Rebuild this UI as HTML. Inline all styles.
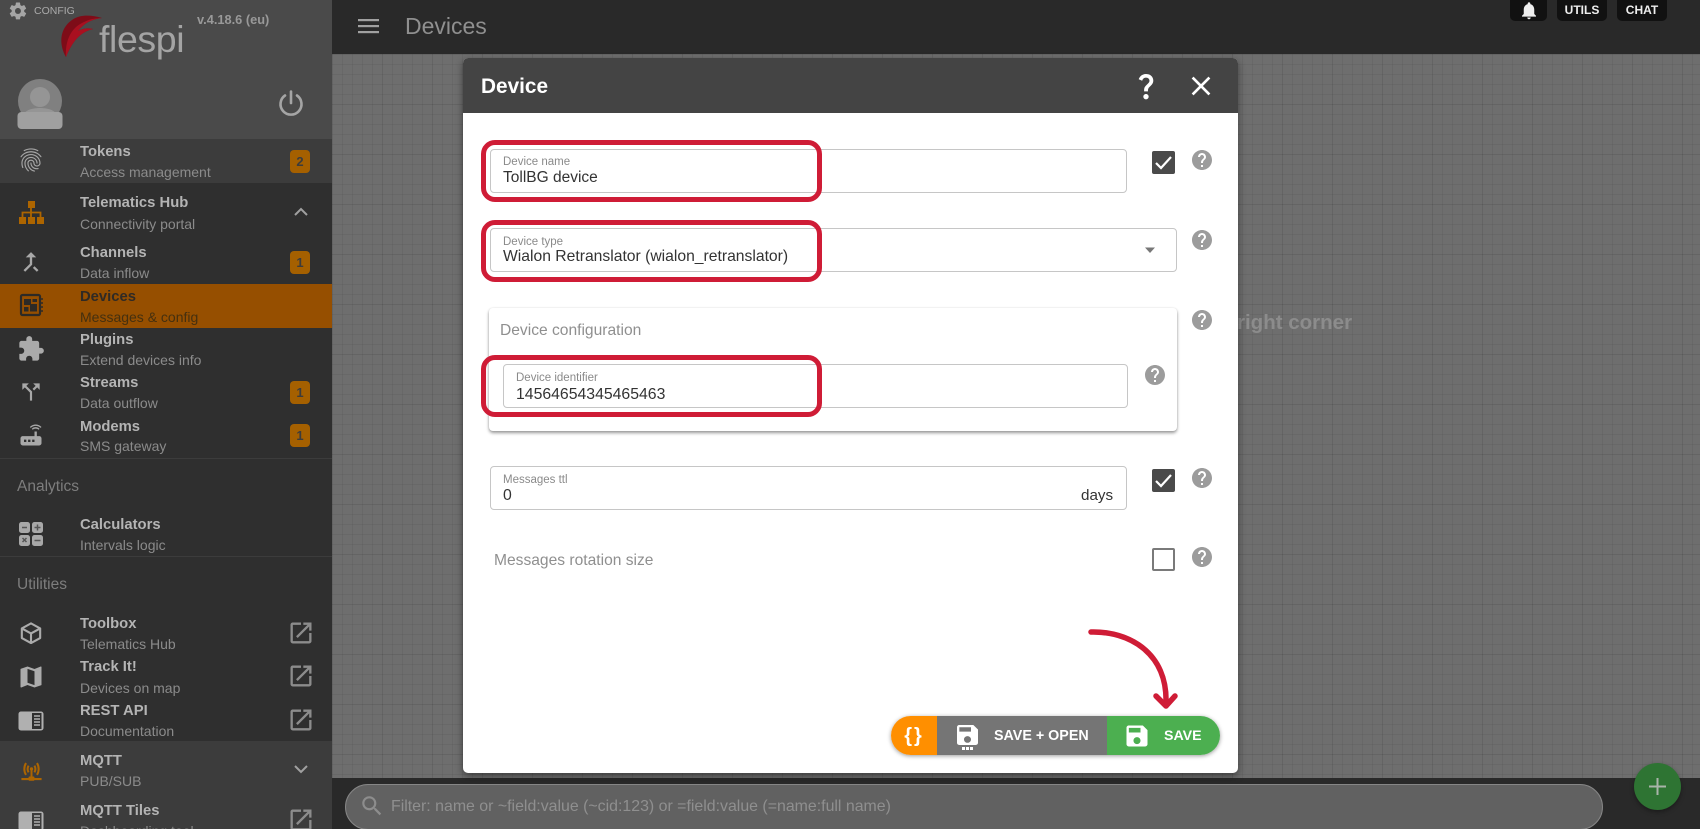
<!DOCTYPE html>
<html><head><meta charset="utf-8"><title>flespi Devices</title>
<style>
*{box-sizing:border-box}
html,body{margin:0;padding:0;width:1700px;height:829px;overflow:hidden;background:#2f2f2f;font-family:"Liberation Sans",sans-serif}
body{position:relative}
.t{position:absolute;white-space:nowrap}
.a{left:80px;font-size:14.8px;font-weight:700;color:#b4b4b4;line-height:20px;height:20px;margin-top:1px}
.s{left:80px;font-size:14px;color:#8b8b8b;line-height:18px;height:18px}
.r{position:absolute;left:0;width:332px}
.ic{position:absolute}
.b{position:absolute;left:290px;width:20px;height:23px;border-radius:4px;background:#a56000;color:#3c3c3c;font-size:13px;font-weight:700;text-align:center;line-height:23px}
.f{position:absolute;background:#fff;border:1px solid #c6c6c6;border-radius:4px;height:44px}
.l{font-size:11.5px;color:#8a8a8a;line-height:14px}
.v{font-size:15.8px;color:#333;line-height:18px}
.red{position:absolute;border:5px solid #cf1c36;border-radius:14px;left:481px;width:341px;height:62px}
.tb{position:absolute;top:0;height:21px;background:#111;border-radius:0 0 5px 5px;color:#eee;font-weight:700;font-size:12px;line-height:21px;text-align:center}
.cb{position:absolute;left:1152px;width:23px;height:23px;background:#4a4a4a;border-radius:2px}
</style></head><body>

<!-- sidebar -->
<div class="r" style="top:0;height:139px;background:#4a4a4a"></div>
<div class="r" style="top:139px;height:44px;background:#3c3c3c"></div>
<div class="r" style="top:183px;height:646px;background:#2f2f2f"></div>
<div class="r" style="top:284px;height:44px;background:#964f00"></div>
<div class="r" style="top:458px;height:1px;background:#3c3c3c"></div>
<div class="r" style="top:556px;height:1px;background:#3c3c3c"></div>
<div class="r" style="top:741px;height:88px;background:#3c3c3c"></div>

<svg class="ic" style="left:9px;top:1px" width="18" height="20" viewBox="0 0 24 24" fill="#a5a5a5"><path transform="translate(-1.5 -1.5) scale(1.12)" d="M19.43 12.98c.04-.32.07-.64.07-.98s-.03-.66-.07-.98l2.11-1.65c.19-.15.24-.42.12-.64l-2-3.46c-.12-.22-.39-.3-.61-.22l-2.49 1c-.52-.4-1.08-.73-1.69-.98l-.38-2.65C14.46 2.18 14.25 2 14 2h-4c-.25 0-.46.18-.49.42l-.38 2.65c-.61.25-1.17.59-1.69.98l-2.49-1c-.23-.09-.49 0-.61.22l-2 3.46c-.13.22-.07.49.12.64l2.11 1.65c-.04.32-.07.65-.07.98s.03.66.07.98l-2.11 1.65c-.19.15-.24.42-.12.64l2 3.46c.12.22.39.3.61.22l2.49-1c.52.4 1.08.73 1.69.98l.38 2.65c.03.24.24.42.49.42h4c.25 0 .46-.18.49-.42l.38-2.65c.61-.25 1.17-.59 1.69-.98l2.49 1c.23.09.49 0 .61-.22l2-3.46c.12-.22.07-.49-.12-.64l-2.11-1.65zM12 15.5c-1.93 0-3.5-1.57-3.5-3.5s1.57-3.5 3.5-3.5 3.5 1.57 3.5 3.5-1.57 3.5-3.5 3.5z"/></svg>
<div class="t" style="left:34px;top:4px;font-size:10.5px;font-weight:400;color:#aaa;line-height:14px">CONFIG</div>
<div class="t" style="left:197px;top:12px;font-size:12.8px;font-weight:700;color:#999;line-height:16px">v.4.18.6 (eu)</div>

<!-- logo -->
<svg class="ic" style="left:0;top:0" width="110" height="62" viewBox="0 0 110 62">
<path d="M66 57C59 45 59 29 72 20C80 14 92 15 102 18C92 19 84 23 78 31C84 28 88 28 93 29C80 32 72 42 66 57Z" fill="#7e0c18"/>
<path d="M66 57C65 42 70 28 84 22C90 19 96 18 102 18C92 19 84 23 78 31C84 28 88 28 93 29C80 32 72 42 66 57Z" fill="#a91020"/>
</svg>
<div class="t" style="left:99px;top:16px;font-size:37.500px;font-weight:400;color:#a4a4a4;line-height:46px;letter-spacing:-.4px">flespi</div>

<!-- avatar -->
<svg class="ic" style="left:15px;top:76px" width="50" height="56" viewBox="0 0 50 56">
<circle cx="25" cy="25" r="22" fill="#808080"/>
<circle cx="25" cy="21" r="10" fill="#959595"/>
<path d="M9 38C12 30 38 30 41 38Z" fill="#959595"/>
<rect x="2.500" y="36" width="45" height="17" rx="4" fill="#a0a0a0"/>
</svg>
<svg class="ic" style="left:276px;top:88px" width="30" height="30" viewBox="0 0 30 30" fill="none" stroke="#a5a5a5" stroke-width="2.600" stroke-linecap="round"><path d="M15 3.500V15"/><path d="M9 7.500a10.500 10.500 0 1 0 12 0"/></svg>

<!-- menu text -->
<div class="t a" style="top:141px">Tokens</div><div class="t s" style="top:163px">Access management</div>
<div class="t a" style="top:192px">Telematics Hub</div><div class="t s" style="top:215px">Connectivity portal</div>
<div class="t a" style="top:242px">Channels</div><div class="t s" style="top:264px">Data inflow</div>
<div class="t a" style="top:286px;color:#2f2a25">Devices</div><div class="t s" style="top:308px;color:#45300f">Messages &amp; config</div>
<div class="t a" style="top:329px">Plugins</div><div class="t s" style="top:351px">Extend devices info</div>
<div class="t a" style="top:372px">Streams</div><div class="t s" style="top:394px">Data outflow</div>
<div class="t a" style="top:416px">Modems</div><div class="t s" style="top:437px">SMS gateway</div>
<div class="t" style="left:17px;top:477px;font-size:15.500px;color:#7d7d7d;line-height:20px">Analytics</div>
<div class="t a" style="top:514px">Calculators</div><div class="t s" style="top:536px">Intervals logic</div>
<div class="t" style="left:17px;top:575px;font-size:15.500px;color:#7d7d7d;line-height:20px">Utilities</div>
<div class="t a" style="top:613px">Toolbox</div><div class="t s" style="top:635px">Telematics Hub</div>
<div class="t a" style="top:656px">Track It!</div><div class="t s" style="top:679px">Devices on map</div>
<div class="t a" style="top:700px">REST API</div><div class="t s" style="top:722px">Documentation</div>
<div class="t a" style="top:750px">MQTT</div><div class="t s" style="top:772px">PUB/SUB</div>
<div class="t a" style="top:800px">MQTT Tiles</div><div class="t s" style="top:822px">Dashboarding tool</div>

<div class="b" style="top:150px">2</div>
<div class="b" style="top:251px">1</div>
<div class="b" style="top:381px">1</div>
<div class="b" style="top:424px">1</div>

<!-- menu icons -->
<svg class="ic" style="left:17px;top:146px" width="28" height="28" viewBox="0 0 24 24" fill="#a5a5a5"><path d="M17.81 4.47c-.08 0-.16-.02-.23-.06C15.66 3.42 14 3 12.01 3c-1.98 0-3.86.47-5.57 1.41-.24.13-.54.04-.68-.2-.13-.24-.04-.55.2-.68C7.82 2.52 9.86 2 12.01 2c2.13 0 3.99.47 6.03 1.52.25.13.34.43.21.67-.09.18-.26.28-.44.28zM3.5 9.72c-.1 0-.2-.03-.29-.09-.23-.16-.28-.47-.12-.7.99-1.4 2.25-2.5 3.75-3.27C9.98 4.04 14 4.03 17.15 5.65c1.5.77 2.76 1.86 3.75 3.25.16.22.11.54-.12.7-.23.16-.54.11-.7-.12-.9-1.26-2.04-2.25-3.39-2.94-2.87-1.47-6.54-1.47-9.4.01-1.36.7-2.5 1.7-3.4 2.96-.08.14-.23.21-.39.21zm6.25 12.07c-.13 0-.26-.05-.35-.15-.87-.87-1.34-1.43-2.01-2.64-.69-1.23-1.05-2.73-1.05-4.34 0-2.97 2.54-5.39 5.66-5.39s5.66 2.42 5.66 5.39c0 .28-.22.5-.5.5s-.5-.22-.5-.5c0-2.42-2.09-4.39-4.66-4.39s-4.66 1.97-4.66 4.39c0 1.44.32 2.77.93 3.85.64 1.15 1.08 1.64 1.85 2.42.19.2.19.51 0 .71-.11.1-.24.15-.37.15zm7.17-1.85c-1.19 0-2.24-.3-3.1-.89-1.49-1.01-2.38-2.65-2.38-4.39 0-.28.22-.5.5-.5s.5.22.5.5c0 1.41.72 2.74 1.94 3.56.71.48 1.54.71 2.54.71.24 0 .64-.03 1.04-.1.27-.05.53.13.58.41.05.27-.13.53-.41.58-.57.11-1.07.12-1.21.12zM14.91 22c-.04 0-.09-.01-.13-.02-1.59-.44-2.63-1.03-3.72-2.1-1.4-1.39-2.17-3.24-2.17-5.22 0-1.62 1.38-2.94 3.08-2.94s3.08 1.32 3.08 2.94c0 1.07.93 1.94 2.08 1.94s2.08-.87 2.08-1.94c0-3.77-3.25-6.83-7.25-6.83-2.84 0-5.44 1.58-6.61 4.03-.39.81-.59 1.76-.59 2.8 0 .78.07 2.01.67 3.61.1.26-.03.55-.29.64-.26.1-.55-.04-.64-.29-.49-1.31-.73-2.61-.73-3.96 0-1.2.23-2.29.68-3.24 1.33-2.79 4.28-4.6 7.51-4.6 4.55 0 8.25 3.51 8.25 7.83 0 1.62-1.38 2.94-3.08 2.94s-3.08-1.32-3.08-2.94c0-1.07-.93-1.94-2.08-1.94s-2.08.87-2.08 1.94c0 1.71.66 3.31 1.87 4.51.95.94 1.86 1.46 3.27 1.85.27.07.42.35.35.61-.05.23-.26.38-.47.38z"/></svg>
<svg class="ic" style="left:19px;top:201px" width="25" height="23" viewBox="0 0 25 23" fill="#ad6500"><rect x="9" y="0" width="7" height="7"/><rect x="0" y="16" width="7" height="7"/><rect x="9" y="16" width="7" height="7"/><rect x="18" y="16" width="7" height="7"/><path d="M12 7v9M3.500 16v-4.500h18V16" fill="none" stroke="#ad6500" stroke-width="1.800"/></svg>
<svg class="ic" style="left:17px;top:248px" width="28" height="28" viewBox="0 0 24 24" fill="#a8a8a8"><path d="M17 20.41L18.41 19 15 15.59 13.59 17 17 20.41zM7.500 8H11v5.590L5.590 19 7 20.41l6-6V8h3.500L12 3.500 7.500 8z"/></svg>
<svg class="ic" style="left:19px;top:293px" width="25" height="25" viewBox="0 0 25 25" fill="none"><rect x="2" y="2" width="19" height="20" rx="1.500" stroke="#2d2a26" stroke-width="2.200"/><rect x="5" y="6" width="7" height="6" fill="#2d2a26"/><rect x="13.500" y="6" width="4.500" height="3" fill="#2d2a26"/><rect x="5" y="14" width="4.500" height="4.500" fill="#2d2a26"/><rect x="11" y="11" width="7" height="7.500" fill="#2d2a26"/><path d="M21.500 6h2.500M21.500 10h2.500M21.500 14h2.500M21.500 18h2.500" stroke="#2d2a26" stroke-width="1.600"/></svg>
<svg class="ic" style="left:17px;top:335px" width="28" height="28" viewBox="0 0 24 24" fill="#aaa"><path d="M20.500 11H19V7c0-1.100-.9-2-2-2h-4V3.500C13 2.120 11.880 1 10.500 1S8 2.120 8 3.500V5H4c-1.100 0-1.990.9-1.990 2v3.800H3.500c1.490 0 2.700 1.210 2.700 2.700s-1.210 2.700-2.700 2.700H2V20c0 1.100.9 2 2 2h3.800v-1.500c0-1.490 1.210-2.700 2.700-2.700 1.490 0 2.700 1.210 2.700 2.700V22H17c1.100 0 2-.9 2-2v-4h1.500c1.380 0 2.500-1.120 2.500-2.500S21.880 11 20.500 11z"/></svg>
<svg class="ic" style="left:18px;top:379px" width="26" height="26" viewBox="0 0 24 24" fill="#a8a8a8"><path d="M14 4l2.290 2.290-2.880 2.880 1.420 1.420 2.880-2.880L20 10V4zm-4 0H4v6l2.290-2.290 4.710 4.700V20h2v-8.410l-5.290-5.300z"/></svg>
<svg class="ic" style="left:17px;top:421px" width="28" height="28" viewBox="0 0 24 24" fill="#a8a8a8"><path d="M20.200 5.900l.8-.8C19.600 3.700 17.800 3 16 3s-3.600.7-5 2.100l.8.8C13 4.800 14.500 4.200 16 4.200s3 .6 4.200 1.700zm-.9.8c-.9-.9-2.100-1.400-3.300-1.400s-2.400.5-3.300 1.400l.8.8c.7-.7 1.600-1 2.500-1 .9 0 1.800.3 2.500 1l.8-.8zM19 13h-2V9h-2v4H5c-1.100 0-2 .9-2 2v4c0 1.100.9 2 2 2h14c1.100 0 2-.9 2-2v-4c0-1.100-.9-2-2-2zM8 18H6v-2h2v2zm3.500 0h-2v-2h2v2zm3.500 0h-2v-2h2v2z"/></svg>
<svg class="ic" style="left:19px;top:522px" width="24" height="24" viewBox="0 0 24 24"><rect x="0" y="0" width="11" height="11" rx="2.500" fill="#a8a8a8"/><rect x="13" y="0" width="11" height="11" rx="2.500" fill="#a8a8a8"/><rect x="0" y="13" width="11" height="11" rx="2.500" fill="#a8a8a8"/><rect x="13" y="13" width="11" height="11" rx="2.500" fill="#a8a8a8"/><path d="M3 5.500h5M15.500 5.500h6M18.500 2.500v6M3.500 16l4 4M7.500 16l-4 4M15.500 18.500h6" stroke="#555" stroke-width="1.500"/></svg>
<svg class="ic" style="left:20px;top:622px" width="22" height="22" viewBox="0 0 24 24" fill="none" stroke="#ababab" stroke-width="2.300" stroke-linejoin="round"><path d="M12 1.500L22 7v10.500L12 23 2 17.500V7z"/><path d="M2 7l10 5.500L22 7M12 12.500V23"/></svg>
<svg class="ic" style="left:17px;top:663px" width="28" height="28" viewBox="0 0 24 24" fill="#ababab"><path d="M20.500 3l-.16.03L15 5.100 9 3 3.360 4.900c-.21.07-.36.25-.36.48V20.500c0 .28.22.5.5.5l.16-.03L9 18.900l6 2.100 5.640-1.900c.21-.07.36-.25.36-.48V3.500c0-.28-.22-.5-.5-.5zM15 19l-6-2.110V5l6 2.110V19z"/></svg>
<svg class="ic" style="left:18px;top:711px" width="26" height="20" viewBox="0 0 26 20"><rect x="0.500" y="0.500" width="25" height="19" rx="2.500" fill="#b0b0b0"/><rect x="14" y="2" width="9.500" height="16" fill="#2f2f2f"/><path d="M16 5h6M16 8h6M16 11h6M16 14h6" stroke="#b0b0b0" stroke-width="1.400"/></svg>
<svg class="ic" style="left:20px;top:761px" width="23" height="21" viewBox="0 0 26 25" fill="none" stroke="#ad6500" stroke-width="2.400"><path d="M6.500 2.500a13 13 0 0 0 0 14M19.500 2.500a13 13 0 0 1 0 14"/><path d="M9.500 5.500a8 8 0 0 0 0 8M16.500 5.500a8 8 0 0 1 0 8"/><circle cx="13" cy="9.500" r="2" fill="#ad6500" stroke="none"/><path d="M13 11v9M1 21.500h24"/><rect x="9.500" y="18.500" width="7" height="5" rx="1" fill="#ad6500" stroke="none"/></svg>
<svg class="ic" style="left:18px;top:811px" width="26" height="20" viewBox="0 0 26 20"><rect x="0.500" y="0.500" width="25" height="19" rx="2.500" fill="#b0b0b0"/><rect x="14" y="2" width="9.500" height="16" fill="#3c3c3c"/><path d="M16 5h6M16 8h6M16 11h6M16 14h6" stroke="#b0b0b0" stroke-width="1.400"/></svg>

<svg class="ic" style="left:289px;top:200px" width="24" height="24" viewBox="0 0 24 24" fill="none" stroke="#a0a0a0" stroke-width="2"><path d="M6 15l6-6 6 6"/></svg>
<svg class="ic" style="left:289px;top:757px" width="24" height="24" viewBox="0 0 24 24" fill="none" stroke="#a0a0a0" stroke-width="2"><path d="M6 9l6 6 6-6"/></svg>
<svg width="0" height="0" style="position:absolute"><defs><path id="oin" d="M19 19H5V5h7V3H5c-1.110 0-2 .9-2 2v14c0 1.100.89 2 2 2h14c1.100 0 2-.9 2-2v-7h-2v7zM14 3v2h3.590l-9.830 9.830 1.410 1.410L19 6.410V10h2V3h-7z"/><path id="hlp" d="M12 2C6.480 2 2 6.480 2 12s4.480 10 10 10 10-4.480 10-10S17.520 2 12 2zm1 17h-2v-2h2v2zm2.070-7.750l-.9.92C13.450 12.900 13 13.500 13 15h-2v-.5c0-1.100.45-2.100 1.170-2.830l1.240-1.260c.37-.36.59-.86.59-1.410 0-1.100-.9-2-2-2s-2 .9-2 2H8c0-2.210 1.790-4 4-4s4 1.790 4 4c0 .88-.36 1.680-.93 2.250z"/><path id="sv" d="M17 3H5c-1.110 0-2 .9-2 2v14c0 1.100.89 2 2 2h14c1.100 0 2-.9 2-2V7l-4-4zm-5 16c-1.660 0-3-1.340-3-3s1.340-3 3-3 3 1.340 3 3-1.340 3-3 3zm3-10H5V5h10v4z"/></defs></svg>
<svg class="ic" style="left:287px;top:619px" width="28" height="28" viewBox="0 0 24 24" fill="#8c8c8c"><use href="#oin"/></svg>
<svg class="ic" style="left:287px;top:662px" width="28" height="28" viewBox="0 0 24 24" fill="#8c8c8c"><use href="#oin"/></svg>
<svg class="ic" style="left:287px;top:706px" width="28" height="28" viewBox="0 0 24 24" fill="#8c8c8c"><use href="#oin"/></svg>
<svg class="ic" style="left:287px;top:806px" width="28" height="28" viewBox="0 0 24 24" fill="#8c8c8c"><use href="#oin"/></svg>

<!-- main -->
<div style="position:absolute;left:332px;top:54px;width:1368px;height:724px;background-color:#6e6e6e;background-image:linear-gradient(rgba(0,0,0,.05) 1px,transparent 1px),linear-gradient(90deg,rgba(0,0,0,.05) 1px,transparent 1px),linear-gradient(rgba(0,0,0,.045) 1px,transparent 1px),linear-gradient(90deg,rgba(0,0,0,.045) 1px,transparent 1px);background-size:10px 10px,10px 10px,50px 50px,50px 50px"></div>
<div style="position:absolute;left:332px;top:0;width:1368px;height:54px;background:#292929"></div>
<svg class="ic" style="left:358px;top:19px" width="21" height="15" viewBox="0 0 21 15" fill="#a0a0a0"><rect width="21" height="2.200" y="0"/><rect width="21" height="2.200" y="6"/><rect width="21" height="2.200" y="12"/></svg>
<div class="t" style="left:405px;top:12px;font-size:23px;color:#8f8f8f;line-height:28px">Devices</div>

<div class="tb" style="left:1510px;width:37px"></div>
<svg class="ic" style="left:1518px;top:0" width="22" height="21" viewBox="0 0 24 24" fill="#eee"><path d="M12 22c1.100 0 2-.9 2-2h-4c0 1.100.89 2 2 2zm6-6v-5c0-3.070-1.640-5.640-4.500-6.320V4c0-.83-.67-1.500-1.500-1.500s-1.500.67-1.500 1.500v.68C7.630 5.360 6 7.920 6 11v5l-2 2v1h16v-1l-2-2z"/></svg>
<div class="tb" style="left:1557px;width:50px">UTILS</div>
<div class="tb" style="left:1617px;width:50px">CHAT</div>

<div class="t" style="left:1237px;top:311px;font-size:20.500px;font-weight:700;color:#8c8c8c;line-height:24px">right corner</div>

<!-- bottom bar -->
<div style="position:absolute;left:332px;top:778px;width:1368px;height:51px;background:#292929"></div>
<div style="position:absolute;left:345px;top:784px;width:1258px;height:46px;background:#616161;border:1px solid #868686;border-radius:23px"></div>
<svg class="ic" style="left:359px;top:793px" width="26" height="26" viewBox="0 0 24 24" fill="#8d8d8d"><path d="M15.500 14h-.79l-.28-.27C15.410 12.590 16 11.110 16 9.500 16 5.910 13.090 3 9.500 3S3 5.910 3 9.500 5.910 16 9.500 16c1.610 0 3.090-.59 4.230-1.570l.27.28v.79l5 4.990L20.490 19l-4.990-5zm-6 0C7.010 14 5 11.990 5 9.500S7.010 5 9.500 5 14 7.010 14 9.500 11.990 14 9.500 14z"/></svg>
<div class="t" style="left:391px;top:797px;font-size:15.900px;color:#8f8f8f;line-height:20px">Filter: name or ~field:value (~cid:123) or =field:value (=name:full name)</div>
<div style="position:absolute;left:1634px;top:763px;width:47px;height:47px;border-radius:50%;background:#2e7433;box-shadow:0 2px 5px rgba(0,0,0,.35)"></div>
<svg class="ic" style="left:1648px;top:777px" width="19" height="19" viewBox="0 0 19 19" fill="#a9b4aa"><rect x="8.500" y="1" width="2" height="17"/><rect x="1" y="8.500" width="17" height="2"/></svg>

<!-- dialog -->
<div style="position:absolute;left:463px;top:58px;width:775px;height:715px;background:#fff;border-radius:5px;box-shadow:0 3px 8px rgba(0,0,0,.45)"></div>
<div style="position:absolute;left:463px;top:58px;width:775px;height:55px;background:#444;border-radius:5px 5px 0 0"></div>
<div class="t" style="left:481px;top:74px;font-size:20.800px;font-weight:700;color:#fff;line-height:25px">Device</div>
<svg class="ic" style="left:1130px;top:70px" width="32" height="32" viewBox="0 0 24 24" fill="#fff"><path d="M11.070 12.850c.77-1.390 2.250-2.210 3.110-3.440.91-1.290.4-3.700-2.180-3.700-1.690 0-2.520 1.280-2.870 2.340L6.540 6.960C7.250 4.830 9.180 3 11.990 3c2.350 0 3.960 1.070 4.780 2.410.7 1.150 1.110 3.300.03 4.900-1.200 1.770-2.350 2.310-2.970 3.450-.25.46-.35.76-.35 2.240h-2.890c-.01-.78-.13-2.050.48-3.150zM14 20c0 1.100-.9 2-2 2s-2-.9-2-2 .9-2 2-2 2 .9 2 2z"/></svg>
<svg class="ic" style="left:1183px;top:70px" width="36" height="32" viewBox="0 0 24 24" fill="#fff" preserveAspectRatio="xMidYMid meet"><path d="M19 6.410L17.590 5 12 10.590 6.410 5 5 6.410 10.590 12 5 17.590 6.410 19 12 13.410 17.590 19 19 17.590 13.410 12z"/></svg>

<div class="f" style="left:490px;top:149px;width:637px"></div>
<div class="t l" style="left:503px;top:155px">Device name</div>
<div class="t v" style="left:503px;top:169px;font-size:15.500px">TollBG device</div>

<div class="f" style="left:490px;top:228px;width:687px"></div>
<div class="t l" style="left:503px;top:235px">Device type</div>
<div class="t v" style="left:503px;top:248px;font-size:15.700px">Wialon Retranslator (wialon_retranslator)</div>
<svg class="ic" style="left:1144px;top:247px" width="12" height="7" viewBox="0 0 12 7" fill="#777"><path d="M1 0.500h10L6 6z"/></svg>

<div style="position:absolute;left:489px;top:308px;width:688px;height:123px;background:#fff;border-radius:4px;box-shadow:0 2px 3px rgba(0,0,0,.4),0 0 2px rgba(0,0,0,.08)"></div>
<div class="t" style="left:500px;top:321px;font-size:15.600px;color:#8f8f8f;line-height:20px">Device configuration</div>
<div class="f" style="left:503px;top:364px;width:625px"></div>
<div class="t l" style="left:516px;top:371px">Device identifier</div>
<div class="t v" style="left:516px;top:386px">14564654345465463</div>

<div class="f" style="left:490px;top:466px;width:637px"></div>
<div class="t l" style="left:503px;top:473px">Messages ttl</div>
<div class="t v" style="left:503px;top:487px">0</div>
<div class="t v" style="left:1081px;top:487px;font-size:15.200px">days</div>
<div class="t" style="left:494px;top:551px;font-size:15.600px;color:#8f8f8f;line-height:20px">Messages rotation size</div>

<div class="cb" style="top:151px"></div>
<svg class="ic" style="left:1152px;top:151px" width="23" height="23" viewBox="0 0 23 23" fill="none" stroke="#fff" stroke-width="2.200"><path d="M4 12l5 5L19 6"/></svg>
<div class="cb" style="top:469px"></div>
<svg class="ic" style="left:1152px;top:469px" width="23" height="23" viewBox="0 0 23 23" fill="none" stroke="#fff" stroke-width="2.200"><path d="M4 12l5 5L19 6"/></svg>
<div class="cb" style="top:548px;background:#fff;border:2px solid #7a7a7a"></div>

<svg class="ic" style="left:1190px;top:148px" width="24" height="24" viewBox="0 0 24 24" fill="#9c9c9c"><use href="#hlp"/></svg>
<svg class="ic" style="left:1190px;top:228px" width="24" height="24" viewBox="0 0 24 24" fill="#9c9c9c"><use href="#hlp"/></svg>
<svg class="ic" style="left:1190px;top:308px" width="24" height="24" viewBox="0 0 24 24" fill="#9c9c9c"><use href="#hlp"/></svg>
<svg class="ic" style="left:1143px;top:363px" width="24" height="24" viewBox="0 0 24 24" fill="#9c9c9c"><use href="#hlp"/></svg>
<svg class="ic" style="left:1190px;top:466px" width="24" height="24" viewBox="0 0 24 24" fill="#9c9c9c"><use href="#hlp"/></svg>
<svg class="ic" style="left:1190px;top:545px" width="24" height="24" viewBox="0 0 24 24" fill="#9c9c9c"><use href="#hlp"/></svg>

<!-- action buttons -->
<div style="position:absolute;left:891px;top:716px;width:329px;height:39px;border-radius:20px;overflow:hidden;box-shadow:0 1px 4px rgba(0,0,0,.4);display:flex">
<div style="width:46px;background:#ff8f00"></div><div style="width:170px;background:#757575"></div><div style="flex:1;background:#4caf50"></div></div>
<div class="t" style="left:898px;top:724px;width:32px;text-align:center;font-size:20px;font-weight:700;color:#fff;line-height:24px;letter-spacing:2px">{}</div>
<svg class="ic" style="left:957px;top:725px" width="21" height="20" viewBox="3 3 18 18" fill="#fff" preserveAspectRatio="none"><use href="#sv"/></svg>
<div style="position:absolute;left:962px;top:747px;width:3px;height:2.500px;background:#fff;box-shadow:4px 0 #fff,8px 0 #fff"></div>
<div class="t" style="left:994px;top:727px;font-size:14.300px;font-weight:700;color:#fff;line-height:18px">SAVE + OPEN</div>
<svg class="ic" style="left:1123px;top:722px" width="28" height="28" viewBox="0 0 24 24" fill="#fff"><use href="#sv"/></svg>
<div class="t" style="left:1164px;top:727px;font-size:14.200px;font-weight:700;color:#fff;line-height:18px">SAVE</div>

<!-- red highlights -->
<div class="red" style="top:140px"></div>
<div class="red" style="top:220px"></div>
<div class="red" style="top:355px"></div>
<svg class="ic" style="left:0;top:0" width="1700" height="829" fill="none" stroke="#cf1c36" stroke-width="5.500" stroke-linecap="round" stroke-linejoin="round"><path d="M1091 632C1128 631 1168 652 1166 704"/><path d="M1156 696L1166 706L1175 696"/></svg>
</body></html>
